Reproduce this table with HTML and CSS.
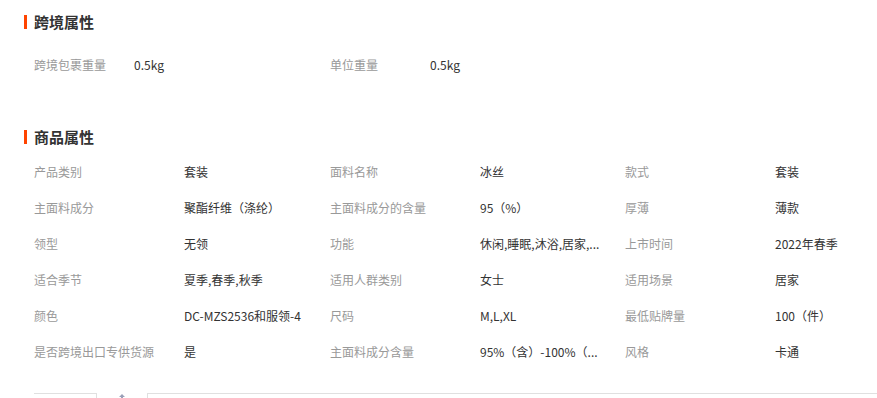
FILE: index.html
```html
<!DOCTYPE html>
<html lang="zh-CN">
<head>
<meta charset="utf-8">
<link rel="stylesheet" href="styles.css">
</head>
<body>
<div class="page">
  <section class="sec sec-cross">
    <h2 class="title">跨境属性</h2>
    <div class="grid grid-cross">
      <div class="item"><span class="label">跨境包裹重量</span><span class="value">0.5kg</span></div>
      <div class="item"><span class="label">单位重量</span><span class="value">0.5kg</span></div>
    </div>
  </section>
  <section class="sec sec-goods">
    <h2 class="title">商品属性</h2>
    <div class="grid">
      <div class="item"><span class="label">产品类别</span><span class="value">套装</span></div>
      <div class="item"><span class="label">面料名称</span><span class="value">冰丝</span></div>
      <div class="item"><span class="label">款式</span><span class="value">套装</span></div>
      <div class="item"><span class="label">主面料成分</span><span class="value">聚酯纤维（涤纶）</span></div>
      <div class="item"><span class="label">主面料成分的含量</span><span class="value">95（%）</span></div>
      <div class="item"><span class="label">厚薄</span><span class="value">薄款</span></div>
      <div class="item"><span class="label">领型</span><span class="value">无领</span></div>
      <div class="item"><span class="label">功能</span><span class="value">休闲,睡眠,沐浴,居家,...</span></div>
      <div class="item"><span class="label">上市时间</span><span class="value">2022年春季</span></div>
      <div class="item"><span class="label">适合季节</span><span class="value">夏季,春季,秋季</span></div>
      <div class="item"><span class="label">适用人群类别</span><span class="value">女士</span></div>
      <div class="item"><span class="label">适用场景</span><span class="value">居家</span></div>
      <div class="item"><span class="label">颜色</span><span class="value">DC-MZS2536和服领-4</span></div>
      <div class="item"><span class="label">尺码</span><span class="value">M,L,XL</span></div>
      <div class="item"><span class="label">最低贴牌量</span><span class="value">100（件）</span></div>
      <div class="item"><span class="label">是否跨境出口专供货源</span><span class="value">是</span></div>
      <div class="item"><span class="label">主面料成分含量</span><span class="value">95%（含）-100%（...</span></div>
      <div class="item"><span class="label">风格</span><span class="value">卡通</span></div>
    </div>
  </section>
  <div class="tabs">
    <div class="tab tab-first"></div>
    <div class="tab-icon">
      <svg width="8" height="6" viewBox="0 0 8 6"><path d="M4 0 L7 3 H5 V6 H3 V3 H1 Z" fill="#9aa0b8"/></svg>
    </div>
    <div class="tab tab-rest"></div>
  </div>
</div>
</body>
</html>
```
FILE: styles.css
```css
html, body {
  margin: 0;
  padding: 0;
  background: #fff;
}
body {
  font-family: "Noto Sans CJK SC", "Liberation Sans", sans-serif;
  font-size: 12px;
  color: #333;
}
.page {
  padding: 12px 0 0 24px;
  overflow: hidden;
  height: 386px;
}
.title {
  margin: 0;
  height: 20px;
  line-height: 20px;
  font-size: 15px;
  font-weight: bold;
  color: #333;
  display: flex;
  align-items: center;
}
.title::before {
  content: "";
  width: 3px;
  height: 14px;
  background: #ff4400;
  margin-right: 7px;
}
.grid {
  display: grid;
  grid-template-columns: 296px 295px 250px;
  padding-left: 10px;
}
.grid-cross {
  margin-top: 14px;
}
.sec-goods {
  margin-top: 45px;
}
.sec-goods .grid {
  margin-top: 6px;
}
.item {
  display: flex;
  height: 36px;
  align-items: center;
  white-space: nowrap;
}
.label {
  width: 150px;
  flex: none;
  color: #999;
}
.grid-cross .label {
  width: 100px;
}
.value {
  color: #333;
}
.tabs {
  display: flex;
  margin-top: 24px;
  margin-left: 10px;
  height: 20px;
}
.tab {
  border-top: 1px solid #e0e0e0;
  height: 20px;
}
.tab-first {
  width: 62px;
  border-right: 1px solid #e0e0e0;
}
.tab-icon {
  width: 50px;
  display: flex;
  justify-content: center;
  padding-top: 1px;
}
.tab-rest {
  flex: 1;
  border-left: 1px solid #e0e0e0;
}
```
